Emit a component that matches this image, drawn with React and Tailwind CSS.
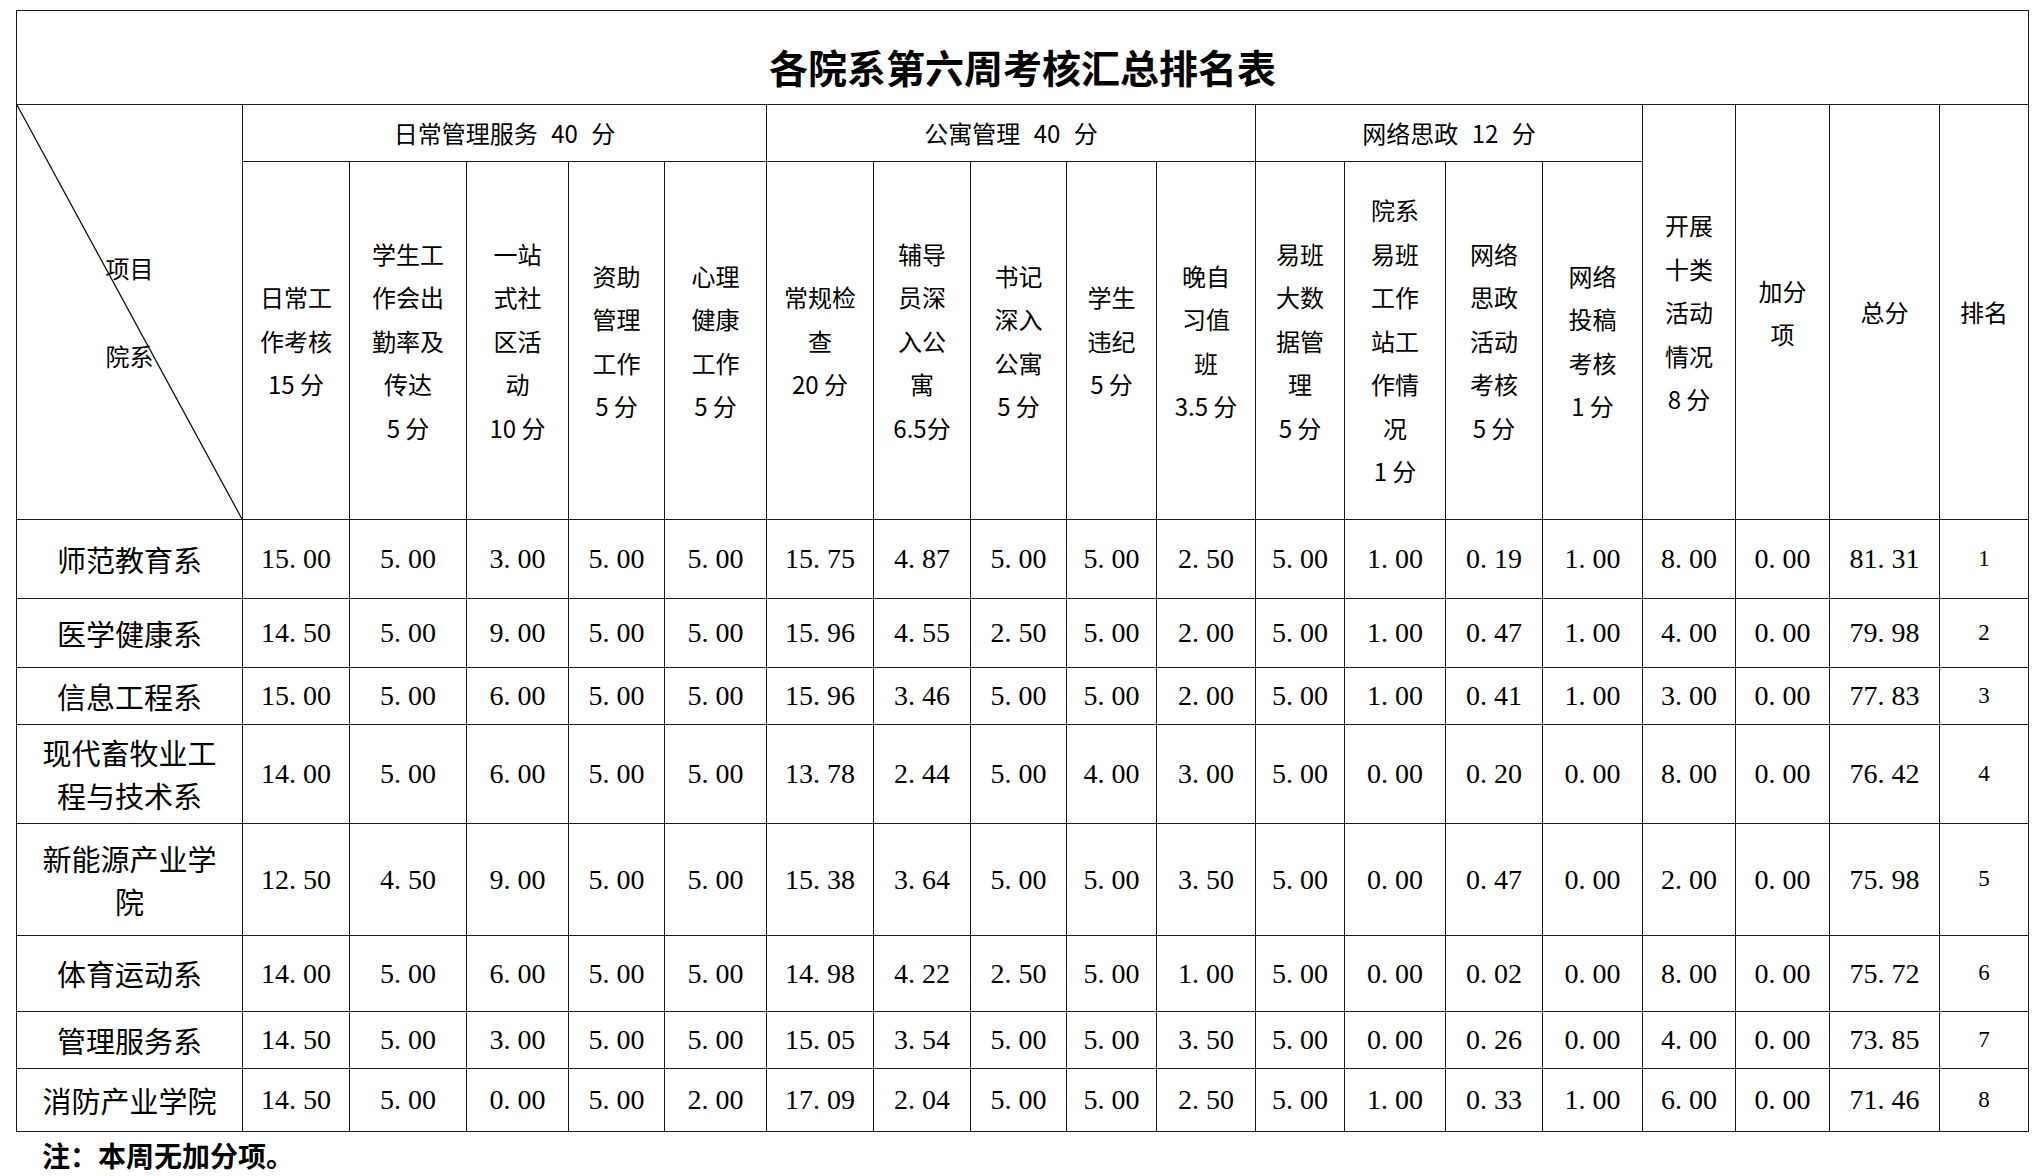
const cjk = "font-['Noto_Sans_CJK_SC',sans-serif]";
const num = "font-['Liberation_Serif','Noto_Sans_CJK_SC',serif]";
const cell = "border border-[#1a1a1a] p-0 text-center align-middle";

const colWidths = [226, 107, 117, 102, 96, 102, 107, 97, 96, 90, 99, 89, 101, 97, 100, 93, 94, 110, 89];

const subHeaders = [
	["日常工", "作考核", "15 分"],
	["学生工", "作会出", "勤率及", "传达", "5 分"],
	["一站", "式社", "区活", "动", "10 分"],
	["资助", "管理", "工作", "5 分"],
	["心理", "健康", "工作", "5 分"],
	["常规检", "查", "20 分"],
	["辅导", "员深", "入公", "寓", "6.5分"],
	["书记", "深入", "公寓", "5 分"],
	["学生", "违纪", "5 分"],
	["晚自", "习值", "班", "3.5 分"],
	["易班", "大数", "据管", "理", "5 分"],
	["院系", "易班", "工作", "站工", "作情", "况", "1 分"],
	["网络", "思政", "活动", "考核", "5 分"],
	["网络", "投稿", "考核", "1 分"],
];

const rows = [
	{ name: ["师范教育系"], h: "h-[79px]", v: "15.00 5.00 3.00 5.00 5.00 15.75 4.87 5.00 5.00 2.50 5.00 1.00 0.19 1.00 8.00 0.00 81.31", rank: 1 },
	{ name: ["医学健康系"], h: "h-[69px]", v: "14.50 5.00 9.00 5.00 5.00 15.96 4.55 2.50 5.00 2.00 5.00 1.00 0.47 1.00 4.00 0.00 79.98", rank: 2 },
	{ name: ["信息工程系"], h: "h-[57px]", v: "15.00 5.00 6.00 5.00 5.00 15.96 3.46 5.00 5.00 2.00 5.00 1.00 0.41 1.00 3.00 0.00 77.83", rank: 3 },
	{ name: ["现代畜牧业工", "程与技术系"], h: "h-[99px]", v: "14.00 5.00 6.00 5.00 5.00 13.78 2.44 5.00 4.00 3.00 5.00 0.00 0.20 0.00 8.00 0.00 76.42", rank: 4 },
	{ name: ["新能源产业学", "院"], h: "h-[112px]", v: "12.50 4.50 9.00 5.00 5.00 15.38 3.64 5.00 5.00 3.50 5.00 0.00 0.47 0.00 2.00 0.00 75.98", rank: 5 },
	{ name: ["体育运动系"], h: "h-[76px]", v: "14.00 5.00 6.00 5.00 5.00 14.98 4.22 2.50 5.00 1.00 5.00 0.00 0.02 0.00 8.00 0.00 75.72", rank: 6 },
	{ name: ["管理服务系"], h: "h-[57px]", v: "14.50 5.00 3.00 5.00 5.00 15.05 3.54 5.00 5.00 3.50 5.00 0.00 0.26 0.00 4.00 0.00 73.85", rank: 7 },
	{ name: ["消防产业学院"], h: "h-[63px]", v: "14.50 5.00 0.00 5.00 2.00 17.09 2.04 5.00 5.00 2.50 5.00 1.00 0.33 1.00 6.00 0.00 71.46", rank: 8 },
];

// SimSun-style numbers: the dot takes half an em
function Score({ value }) {
	const [a, b] = value.split(".");
	return (
		<span className="whitespace-nowrap">
			{a}
			<span className="inline-block w-[0.5em] text-left">.</span>
			{b}
		</span>
	);
}

function Lines({ lines, className = "" }) {
	return (
		<div className={className}>
			{lines.map((l, i) => (
				<div key={i} className="whitespace-nowrap">
					{l}
				</div>
			))}
		</div>
	);
}

export default function App() {
	return (
		<div className="min-h-[1176px] bg-white pl-[16px] pt-[10px] text-black">
			<table className="w-[2012px] table-fixed border-collapse">
				<colgroup>
					{colWidths.map((w, i) => (
						<col key={i} style={{ width: w }} />
					))}
				</colgroup>
				<tbody>
					<tr className="h-[94px]">
						<td colSpan={19} className={`${cell} pt-[18px] ${cjk} text-[39px] font-bold`}>
							各院系第六周考核汇总排名表
						</td>
					</tr>
					<tr className={`h-[57px] ${cjk} text-[24px]`}>
						<td rowSpan={2} className={`${cell} relative`}>
							<svg
								className="absolute inset-0 h-full w-full"
								viewBox="0 0 100 100"
								preserveAspectRatio="none"
							>
								<line x1="0" y1="0" x2="100" y2="100" stroke="#111" strokeWidth="1.3" vectorEffect="non-scaling-stroke" />
							</svg>
							<div className="relative flex flex-col items-center gap-[58px] leading-[30px]">
								<span>项目</span>
								<span>院系</span>
							</div>
						</td>
						<td colSpan={5} className={`${cell} [word-spacing:8px]`}>日常管理服务 40 分</td>
						<td colSpan={5} className={`${cell} [word-spacing:8px]`}>公寓管理 40 分</td>
						<td colSpan={4} className={`${cell} [word-spacing:8px]`}>网络思政 12 分</td>
						<td rowSpan={2} className={cell}>
							<Lines lines={["开展", "十类", "活动", "情况", "8 分"]} className="leading-[43.5px]" />
						</td>
						<td rowSpan={2} className={cell}>
							<Lines lines={["加分", "项"]} className="leading-[43.5px]" />
						</td>
						<td rowSpan={2} className={cell}>总分</td>
						<td rowSpan={2} className={cell}>排名</td>
					</tr>
					<tr className={`h-[358px] ${cjk} text-[24px]`}>
						{subHeaders.map((lines, i) => (
							<td key={i} className={cell}>
								<Lines lines={lines} className="leading-[43.5px]" />
							</td>
						))}
					</tr>
					{rows.map((r) => (
						<tr key={r.rank} className={r.h}>
							<td className={`${cell} ${cjk} text-[29px]`}>
								<Lines lines={r.name} className="leading-[43px]" />
							</td>
							{r.v.split(" ").map((v, i) => (
								<td key={i} className={`${cell} ${num} text-[28px]`}>
									<Score value={v} />
								</td>
							))}
							<td className={`${cell} ${num} text-[23px]`}>{r.rank}</td>
						</tr>
					))}
				</tbody>
			</table>
			<p className={`mt-[8px] pl-[26px] ${cjk} text-[28px] font-bold leading-[30px]`}>
				注：本周无加分项。
			</p>
		</div>
	);
}
